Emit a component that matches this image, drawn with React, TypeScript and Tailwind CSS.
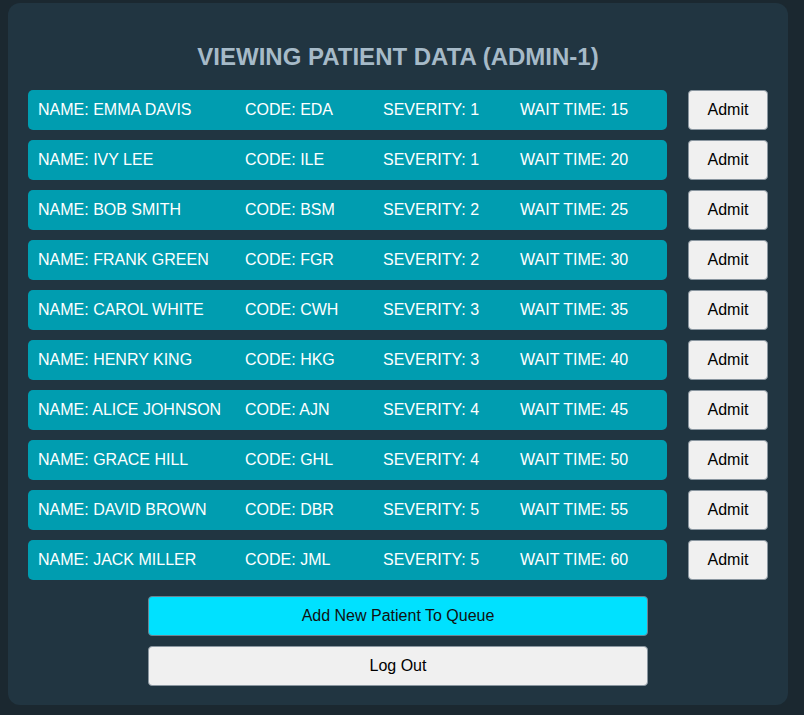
const patients = [
  { name: "EMMA DAVIS", code: "EDA", severity: 1, wait: 15 },
  { name: "IVY LEE", code: "ILE", severity: 1, wait: 20 },
  { name: "BOB SMITH", code: "BSM", severity: 2, wait: 25 },
  { name: "FRANK GREEN", code: "FGR", severity: 2, wait: 30 },
  { name: "CAROL WHITE", code: "CWH", severity: 3, wait: 35 },
  { name: "HENRY KING", code: "HKG", severity: 3, wait: 40 },
  { name: "ALICE JOHNSON", code: "AJN", severity: 4, wait: 45 },
  { name: "GRACE HILL", code: "GHL", severity: 4, wait: 50 },
  { name: "DAVID BROWN", code: "DBR", severity: 5, wait: 55 },
  { name: "JACK MILLER", code: "JML", severity: 5, wait: 60 },
];

export default function App() {
  return (
    <div className="min-h-[715px] bg-[#1b2830] px-2 pt-[3px] pb-[9px] font-['Liberation_Sans',Arial,sans-serif]">
      <div className="flex w-[780px] flex-col items-center rounded-xl bg-[#213541] px-5 pt-[40px] pb-[19px]">
        <h1 className="text-[24px] font-bold leading-[27px] text-[#a6bac8]">
          VIEWING PATIENT DATA (ADMIN-1)
        </h1>

        <div className="mt-[20px] flex w-full flex-col gap-[10px]">
          {patients.map((p) => (
            <div key={p.code} className="flex h-10 items-center gap-[21px]">
              <div className="flex h-full flex-1 items-center rounded-[5px] bg-[#009db0] pb-px pl-[10px] text-base text-white">
                <span className="w-[207px]">NAME: {p.name}</span>
                <span className="w-[138px]">CODE: {p.code}</span>
                <span className="w-[137px]">SEVERITY: {p.severity}</span>
                <span>WAIT TIME: {p.wait}</span>
              </div>
              <button className="h-full w-20 rounded-[4px] border border-[#8a96a0] bg-[#f0f0f0] text-base text-black">
                Admit
              </button>
            </div>
          ))}
        </div>

        <button className="mt-4 h-10 w-[500px] rounded-[4px] border border-[#6d8290] bg-[#00e1ff] text-base text-[#111]">
          Add New Patient To Queue
        </button>
        <button className="mt-[10px] h-10 w-[500px] rounded-[4px] border border-[#8a96a0] bg-[#f0f0f0] text-base text-black">
          Log Out
        </button>
      </div>
    </div>
  );
}
